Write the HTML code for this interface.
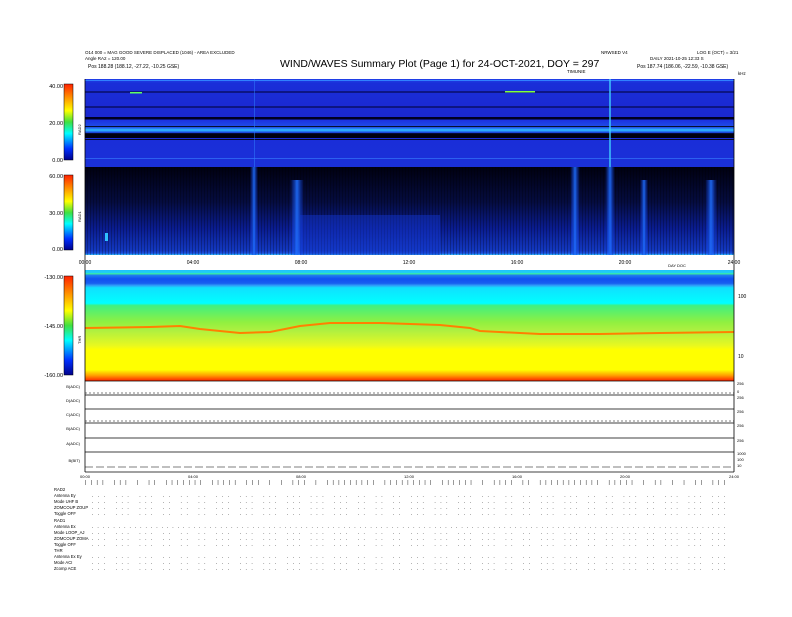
<!DOCTYPE html>
<html><head><meta charset="utf-8"><style>
body{margin:0;background:#fff;width:792px;height:612px;overflow:hidden;font-family:"Liberation Sans",sans-serif}
svg text{font-family:"Liberation Sans",sans-serif}
</style></head><body>
<svg width="792" height="612" viewBox="0 0 792 612" xmlns="http://www.w3.org/2000/svg">
<defs>
<linearGradient id="cb" x1="0" y1="1" x2="0" y2="0">
<stop offset="0" stop-color="#00008a"/><stop offset="0.15" stop-color="#0030ff"/><stop offset="0.35" stop-color="#00ffff"/><stop offset="0.5" stop-color="#40e040"/><stop offset="0.65" stop-color="#ffff00"/><stop offset="0.85" stop-color="#ff8000"/><stop offset="1" stop-color="#ff2000"/>
</linearGradient>
<linearGradient id="thr" x1="0" y1="0" x2="0" y2="1">
<stop offset="0" stop-color="#20c0ff"/><stop offset="0.025" stop-color="#20d0f0"/><stop offset="0.035" stop-color="#40f090"/><stop offset="0.045" stop-color="#2080f0"/><stop offset="0.08" stop-color="#1050f0"/><stop offset="0.12" stop-color="#1860f0"/><stop offset="0.14" stop-color="#30a0f8"/><stop offset="0.16" stop-color="#10e0ff"/><stop offset="0.3" stop-color="#00ffff"/><stop offset="0.32" stop-color="#40f080"/><stop offset="0.47" stop-color="#90f040"/><stop offset="0.55" stop-color="#b0f040"/><stop offset="0.68" stop-color="#e8f820"/><stop offset="0.72" stop-color="#ffff00"/><stop offset="0.9" stop-color="#ffff00"/><stop offset="0.95" stop-color="#ffa000"/><stop offset="1" stop-color="#ff2000"/>
</linearGradient>
<linearGradient id="r2" x1="0" y1="0" x2="0" y2="1">
<stop offset="0" stop-color="#2040e8"/><stop offset="0.05" stop-color="#1a2ed8"/><stop offset="0.43" stop-color="#1a28d0"/><stop offset="0.43" stop-color="#000020"/><stop offset="0.46" stop-color="#000020"/><stop offset="0.46" stop-color="#1a30e0"/><stop offset="0.55" stop-color="#2050e8"/><stop offset="0.58" stop-color="#30c0ff"/><stop offset="0.61" stop-color="#1a40e0"/><stop offset="0.62" stop-color="#000010"/><stop offset="0.67" stop-color="#000010"/><stop offset="0.67" stop-color="#1a2ed8"/><stop offset="1" stop-color="#1a30d8"/>
</linearGradient>
<linearGradient id="r1" x1="0" y1="0" x2="0" y2="1">
<stop offset="0" stop-color="#000010"/><stop offset="0.4" stop-color="#050c40"/><stop offset="0.7" stop-color="#0a1c90"/><stop offset="0.95" stop-color="#1338c0"/><stop offset="0.98" stop-color="#1a50e0"/><stop offset="1" stop-color="#30c0ff"/>
</linearGradient>
<linearGradient id="st" x1="0" y1="0" x2="1" y2="0">
<stop offset="0" stop-color="#1040f0" stop-opacity="0"/><stop offset="0.5" stop-color="#2070ff" stop-opacity="0.9"/><stop offset="1" stop-color="#1040f0" stop-opacity="0"/>
</linearGradient>
<pattern id="dk" width="3" height="88" patternUnits="userSpaceOnUse">
<rect width="1" height="88" fill="#000" opacity="0.25"/>
</pattern>
</defs>
<text x="85" y="54" font-size="4.5">O14 000 = MAG GOOD SEVERE DISPLACED (1046) - AREA EXCLUDED</text>
<text x="85" y="60" font-size="4.5">Angle RA2 = 120.00</text>
<text x="88" y="68" font-size="5">Pos    188.28 (188.12, -27.22, -10.25 GSE)</text>
<text x="280" y="67" font-size="10.5">WIND/WAVES Summary Plot (Page 1) for 24-OCT-2021, DOY = 297</text>
<text x="601" y="54" font-size="4.5">NRWSED V4</text>
<text x="697" y="54" font-size="4.5">LOG E (OCT) = 3/21</text>
<text x="650" y="60" font-size="4.5">DAILY 2021-10-25 12:33 S</text>
<text x="637" y="68" font-size="5">Pos    187.74 (186.06, -22.59, -10.38 GSE)</text>
<text x="567" y="73" font-size="4.5">TIMUNIE</text>
<text x="738" y="75" font-size="4.5">kHz</text>
<!-- RAD2 -->
<rect x="85" y="79" width="649" height="88" fill="url(#r2)"/>
<rect x="85" y="80" width="649" height="1" fill="#3080ff"/>
<rect x="85" y="91" width="649" height="2" fill="#000030" opacity="0.5"/>
<rect x="85" y="106" width="649" height="2" fill="#000030" opacity="0.5"/>
<rect x="85" y="126" width="649" height="0.8" fill="#000"/>
<rect x="85" y="139" width="649" height="0.8" fill="#000"/>
<rect x="85" y="158" width="649" height="1" fill="#2c60f0"/>
<rect x="609" y="79" width="2" height="176" fill="#40d0ff" opacity="0.7"/>
<rect x="254" y="79" width="1" height="88" fill="#3080ff" opacity="0.5"/>
<rect x="130" y="92" width="12" height="1.5" fill="#60ff60"/>
<rect x="505" y="91" width="30" height="1.5" fill="#80ff40"/>
<!-- RAD1 -->
<rect x="85" y="167" width="649" height="88" fill="url(#r1)"/>
<rect x="85" y="167" width="649" height="88" fill="url(#dk)"/>
<rect x="250" y="167" width="8" height="88" fill="url(#st)"/>
<rect x="290" y="180" width="14" height="75" fill="url(#st)"/>
<rect x="300" y="215" width="140" height="40" fill="#1538d0" opacity="0.45"/>
<rect x="570" y="167" width="10" height="88" fill="url(#st)"/>
<rect x="605" y="167" width="10" height="88" fill="url(#st)"/>
<rect x="640" y="180" width="8" height="75" fill="url(#st)"/>
<rect x="705" y="180" width="12" height="75" fill="url(#st)"/>
<rect x="105" y="233" width="3" height="8" fill="#30c0ff"/>
<!-- colorbars -->
<rect x="64" y="84" width="9" height="76" fill="url(#cb)" stroke="#000" stroke-width="0.5"/>
<rect x="64" y="175" width="9" height="75" fill="url(#cb)" stroke="#000" stroke-width="0.5"/>
<rect x="64" y="276" width="9" height="99" fill="url(#cb)" stroke="#000" stroke-width="0.5"/>
<g font-size="5.5" text-anchor="end">
<text x="63" y="88">40.00</text><text x="63" y="125">20.00</text><text x="63" y="162">0.00</text>
<text x="63" y="178">60.00</text><text x="63" y="215">30.00</text><text x="63" y="251">0.00</text>
<text x="63" y="279">-130.00</text><text x="63" y="328">-145.00</text><text x="63" y="377">-160.00</text>
</g>
<g font-size="4" transform="rotate(-90)"><text x="-135" y="81">RAD2</text><text x="-222" y="81">RAD1</text><text x="-344" y="81">THR</text></g>
<!-- time labels -->
<g font-size="5" text-anchor="middle">
<text x="85" y="264">00:00</text><text x="193" y="264">04:00</text><text x="301" y="264">08:00</text><text x="409" y="264">12:00</text><text x="517" y="264">16:00</text><text x="625" y="264">20:00</text><text x="734" y="264">24:00</text>
<text x="677" y="267" font-size="4">DAY DOC</text>
<text x="85" y="478" font-size="4">00:00</text><text x="193" y="478" font-size="4">04:00</text><text x="301" y="478" font-size="4">08:00</text><text x="409" y="478" font-size="4">12:00</text><text x="517" y="478" font-size="4">16:00</text><text x="625" y="478" font-size="4">20:00</text><text x="734" y="478" font-size="4">24:00</text>
</g>
<!-- THR -->
<rect x="85" y="270" width="649" height="111" fill="url(#thr)"/>
<path d="M85 328 L150 327 L180 326 L200 329 L240 333 L270 332 L300 326 L330 323 L380 323 L440 325 L470 328 L480 331 L540 334 L600 334 L660 333 L734 332" stroke="#ff8000" stroke-width="2" fill="none"/>
<g font-size="5"><text x="738" y="298">100</text><text x="738" y="358">10</text></g>
<!-- small panels -->
<g stroke="#000" stroke-width="0.8">
<line x1="85" y1="381" x2="734" y2="381"/>
<line x1="85" y1="395" x2="734" y2="395"/>
<line x1="85" y1="409" x2="734" y2="409"/>
<line x1="85" y1="423" x2="734" y2="423"/>
<line x1="85" y1="438" x2="734" y2="438"/>
<line x1="85" y1="452" x2="734" y2="452"/>
<line x1="85" y1="472" x2="734" y2="472"/>
<line x1="85" y1="79" x2="85" y2="472"/>
<line x1="734" y1="79" x2="734" y2="472"/>
</g>
<g stroke="#000" stroke-width="0.6" stroke-dasharray="2 2">
<line x1="85" y1="393" x2="734" y2="393"/>
<line x1="85" y1="421" x2="734" y2="421"/>
<line x1="85" y1="467" x2="734" y2="467" stroke-dasharray="8 3"/>
</g>
<g font-size="4" text-anchor="end">
<text x="80" y="388">B(ADC)</text><text x="80" y="402">D(ADC)</text><text x="80" y="416">C(ADC)</text><text x="80" y="430">B(ADC)</text><text x="80" y="445">A(ADC)</text><text x="80" y="462">B(BIT)</text>
</g>
<g font-size="4"><text x="737" y="385">256</text><text x="737" y="393">0</text><text x="737" y="399">256</text><text x="737" y="413">256</text><text x="737" y="427">256</text><text x="737" y="442">256</text><text x="737" y="455">1000</text><text x="737" y="461">100</text><text x="737" y="467">10</text></g>
<!-- bottom table -->
<g font-size="4.2">
<text x="54" y="491">RAD2</text><text x="54" y="497">Antenna    Ey</text><text x="54" y="503">Mode    UHF B</text><text x="54" y="509">ZOMCOUP ZOUP</text><text x="54" y="515">Toggle    OFF</text>
<text x="54" y="522">RAD1</text><text x="54" y="528">Antenna    Ex</text><text x="54" y="534">Mode  LOOP_AJ</text><text x="54" y="540">ZOMCOUP ZOMA</text><text x="54" y="546">Toggle    OFF</text>
<text x="54" y="552">THR</text><text x="54" y="558">Antenna  Ex Ey</text><text x="54" y="564">Mode    ACI</text><text x="54" y="570">Zcomp    ACE</text>
</g>
<g font-size="5" fill="#000">
<text x="85" y="484" textLength="640" lengthAdjust="spacing">|||| ||| | || ||||||| ||||| ||| | | ||| | ||||||||| ||||||||| |||||| | |||| || ||||||||||| ||||| | || | | || |||</text>
<text x="92" y="497" textLength="633" lengthAdjust="spacing">...  ...  ...  ..  ..  ..  ...  ...  ...  ...  ...  ...  ..  ..  ..  ...  ...  ...  ...  ..  ..  ...  ...  ..  ..  ...  ..  ...  ...  ...</text>
<text x="92" y="503" textLength="633" lengthAdjust="spacing">...  ...  ...  ..  ..  ..  ...  ...  ...  ...  ...  ...  ..  ..  ..  ...  ...  ...  ...  ..  ..  ...  ...  ..  ..  ...  ..  ...  ...  ...</text>
<text x="92" y="509" textLength="633" lengthAdjust="spacing">...  ...  ...  ..  ..  ..  ...  ...  ...  ...  ...  ...  ..  ..  ..  ...  ...  ...  ...  ..  ..  ...  ...  ..  ..  ...  ..  ...  ...  ...</text>
<text x="92" y="515" textLength="633" lengthAdjust="spacing">...  ...  ...  ..  ..  ..  ...  ...  ...  ...  ...  ...  ..  ..  ..  ...  ...  ...  ...  ..  ..  ...  ...  ..  ..  ...  ..  ...  ...  ...</text>
<text x="92" y="528" textLength="633" lengthAdjust="spacing">.......................................................................................................................</text>
<text x="92" y="534" textLength="633" lengthAdjust="spacing">...  ...  ...  ..  ..  ..  ...  ...  ...  ...  ...  ...  ..  ..  ..  ...  ...  ...  ...  ..  ..  ...  ...  ..  ..  ...  ..  ...  ...  ...</text>
<text x="92" y="540" textLength="633" lengthAdjust="spacing">...  ...  ...  ..  ..  ..  ...  ...  ...  ...  ...  ...  ..  ..  ..  ...  ...  ...  ...  ..  ..  ...  ...  ..  ..  ...  ..  ...  ...  ...</text>
<text x="92" y="546" textLength="633" lengthAdjust="spacing">...  ...  ...  ..  ..  ..  ...  ...  ...  ...  ...  ...  ..  ..  ..  ...  ...  ...  ...  ..  ..  ...  ...  ..  ..  ...  ..  ...  ...  ...</text>
<text x="92" y="558" textLength="633" lengthAdjust="spacing">...  ...  ...  ..  ..  ..  ...  ...  ...  ...  ...  ...  ..  ..  ..  ...  ...  ...  ...  ..  ..  ...  ...  ..  ..  ...  ..  ...  ...  ...</text>
<text x="92" y="564" textLength="633" lengthAdjust="spacing">...  ...  ...  ..  ..  ..  ...  ...  ...  ...  ...  ...  ..  ..  ..  ...  ...  ...  ...  ..  ..  ...  ...  ..  ..  ...  ..  ...  ...  ...</text>
<text x="92" y="570" textLength="633" lengthAdjust="spacing">...  ...  ...  ..  ..  ..  ...  ...  ...  ...  ...  ...  ..  ..  ..  ...  ...  ...  ...  ..  ..  ...  ...  ..  ..  ...  ..  ...  ...  ...</text>
</g>
</svg>
</body></html>
